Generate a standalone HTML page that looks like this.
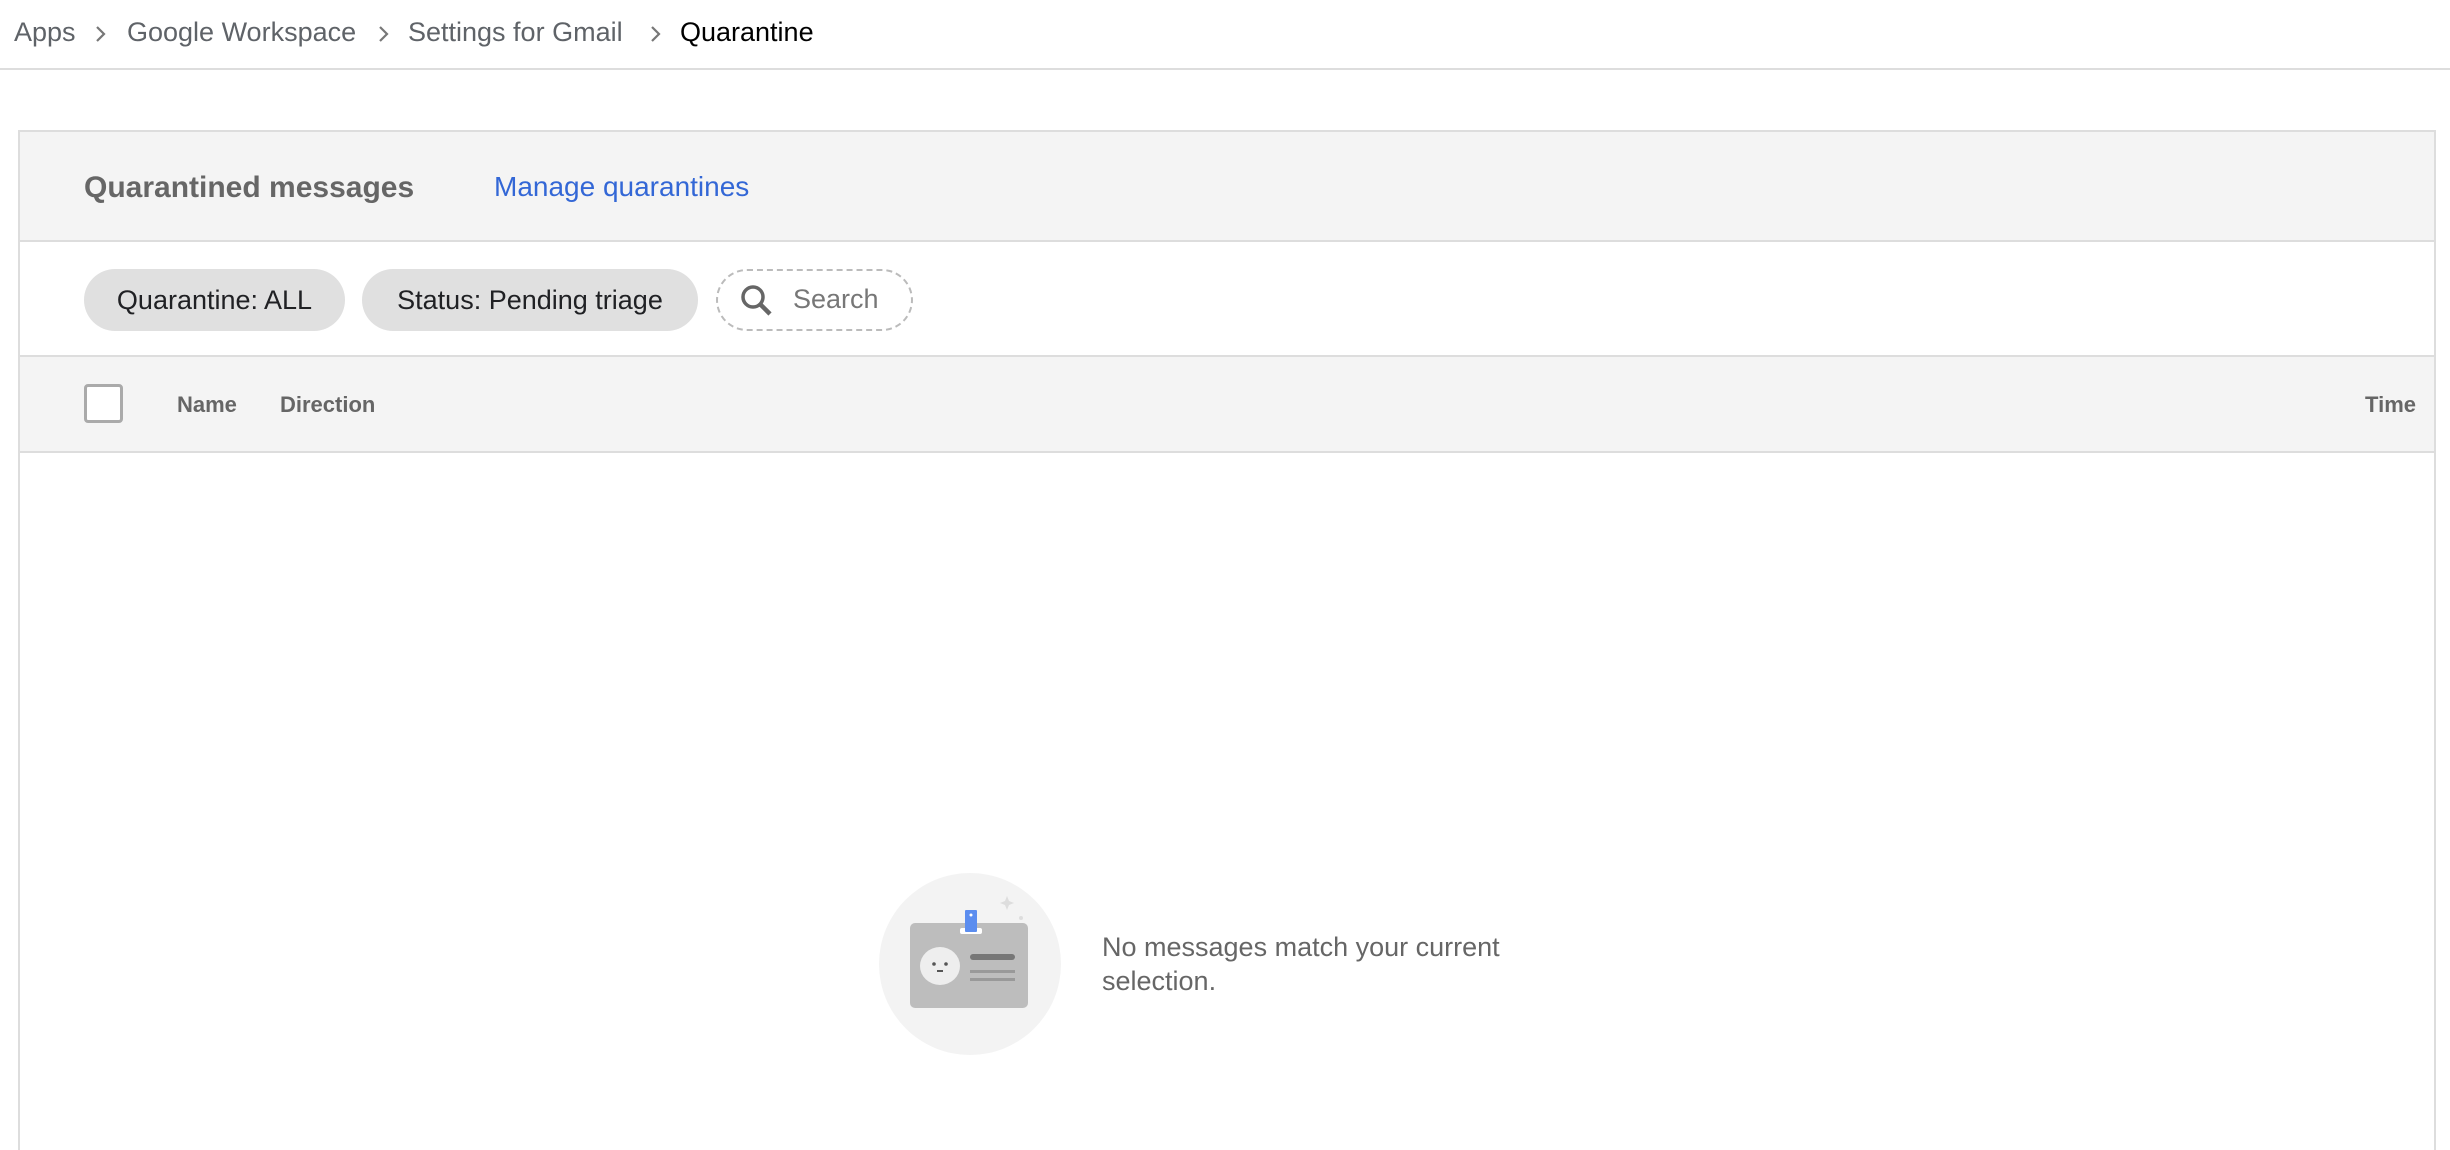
<!DOCTYPE html>
<html><head><meta charset="utf-8"><style>
*{margin:0;padding:0;box-sizing:border-box}
body{width:2450px;height:1144px;overflow:hidden;background:#fff;font-family:"Liberation Sans",Arial,sans-serif;position:relative}
.a{position:absolute;white-space:nowrap}
.bc{top:17px;font-size:27px;color:#5f6368}
.chip{position:absolute;top:269px;height:62px;border-radius:31px;background:#e0e0e0;color:#202124;font-size:27px;line-height:62px;text-align:center}
.th{top:392px;font-size:22px;color:#666;font-weight:bold}
</style></head><body>
<div class="a bc" style="left:14px">Apps</div>
<svg class="a" style="left:94px;top:24px" width="14" height="20"><path d="M3 3l7 7-7 7" stroke="#777" stroke-width="2.2" fill="none"/></svg>
<div class="a bc" style="left:127px">Google Workspace</div>
<svg class="a" style="left:377px;top:24px" width="14" height="20"><path d="M3 3l7 7-7 7" stroke="#777" stroke-width="2.2" fill="none"/></svg>
<div class="a bc" style="left:408px">Settings for Gmail</div>
<svg class="a" style="left:649px;top:24px" width="14" height="20"><path d="M3 3l7 7-7 7" stroke="#777" stroke-width="2.2" fill="none"/></svg>
<div class="a bc" style="left:680px;color:#000">Quarantine</div>
<div class="a" style="left:0;top:68px;width:2450px;height:2px;background:#ddd"></div>

<div class="a" style="left:18px;top:130px;width:2418px;height:1020px;border:2px solid #ddd;border-bottom:none"></div>
<div class="a" style="left:20px;top:132px;width:2414px;height:110px;background:#f4f4f4;border-bottom:2px solid #ddd"></div>
<div class="a" style="left:84px;top:171px;font-size:30px;color:#666;font-weight:bold">Quarantined messages</div>
<div class="a" style="left:494px;top:171px;font-size:28px;color:#3367d6">Manage quarantines</div>

<div class="chip" style="left:84px;width:261px">Quarantine: ALL</div>
<div class="chip" style="left:362px;width:336px">Status: Pending triage</div>
<div class="a" style="left:716px;top:269px;width:197px;height:62px;border:2px dashed #bbb;border-radius:31px"></div>
<svg class="a" style="left:738px;top:282px" width="40" height="40"><circle cx="15" cy="15" r="10" stroke="#666" stroke-width="3.5" fill="none"/><path d="M22 22l10 10" stroke="#666" stroke-width="4.5"/></svg>
<div class="a" style="left:793px;top:284px;font-size:27px;color:#777">Search</div>

<div class="a" style="left:20px;top:355px;width:2414px;height:98px;background:#f4f4f4;border-top:2px solid #ddd;border-bottom:2px solid #ddd"></div>
<div class="a" style="left:84px;top:384px;width:39px;height:39px;border:3px solid #aaa;border-radius:4px;background:#fff"></div>
<div class="a th" style="left:177px">Name</div>
<div class="a th" style="left:280px">Direction</div>
<div class="a th" style="right:34px">Time</div>

<svg class="a" style="left:0;top:0" width="2450" height="1144">
<circle cx="970" cy="964" r="91" fill="#f3f3f3"/>
<rect x="910" y="923" width="118" height="85" rx="5" fill="#bdbdbd"/>
<rect x="960" y="928" width="22" height="6" rx="2" fill="#fff"/>
<rect x="965" y="910" width="12" height="22" rx="1" fill="#5b8def"/>
<circle cx="971" cy="915" r="1.5" fill="#fff"/>
<ellipse cx="940" cy="966" rx="20" ry="19" fill="#eee"/>
<circle cx="934" cy="964" r="1.8" fill="#555"/><circle cx="946" cy="964" r="1.8" fill="#555"/>
<rect x="937" y="970" width="6" height="2" fill="#555"/>
<rect x="970" y="954" width="45" height="6" rx="3" fill="#777"/>
<rect x="970" y="970" width="45" height="3" fill="#999"/>
<rect x="970" y="978" width="45" height="3" fill="#999"/>
<path d="M1007 896l2 5 5 2-5 2-2 5-2-5-5-2 5-2z" fill="#ddd"/>
<circle cx="1021" cy="918" r="2" fill="#ddd"/>
</svg>
<div class="a" style="left:1102px;top:930px;font-size:27px;color:#666;line-height:34px">No messages match your current<br>selection.</div>
</body></html>
